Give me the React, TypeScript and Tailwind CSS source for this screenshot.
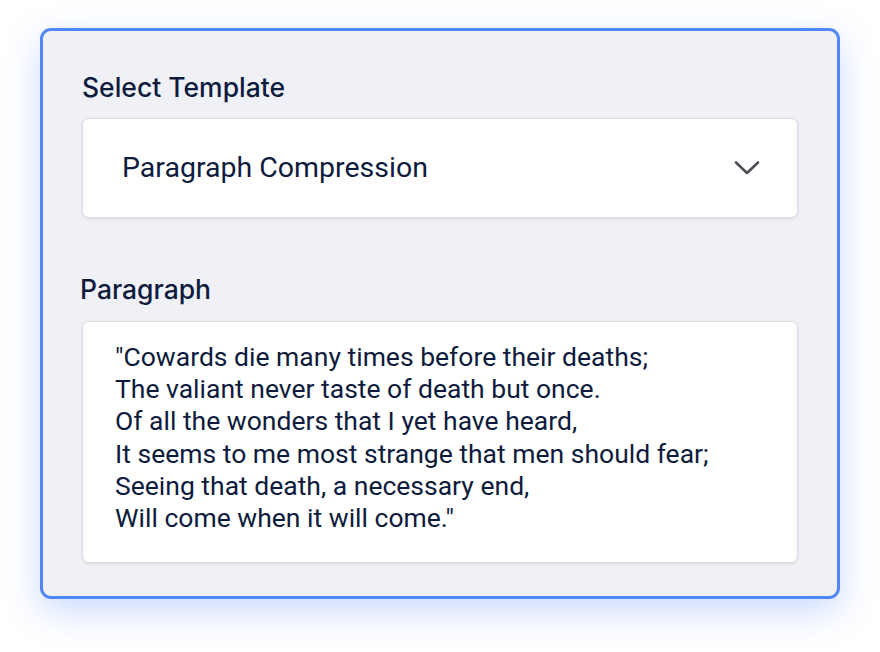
import React from 'react';

const poem = `"Cowards die many times before their deaths;
The valiant never taste of death but once.
Of all the wonders that I yet have heard,
It seems to me most strange that men should fear;
Seeing that death, a necessary end,
Will come when it will come."`;

export default function App() {
    return (
        <main className="min-h-[652px] bg-white pt-[28px] pl-[40px] font-['Roboto',sans-serif] text-[#0e1b3d]">
            <div className="w-[800px] rounded-[11px] border-[3px] border-[#5086f8] bg-[#f0f1f6] px-[39px] pt-[40px] pb-[33px] shadow-[0_12px_36px_rgba(80,134,248,0.3)]">
                {/* Template select */}
                <label className="block font-['Inter',sans-serif] text-[26.5px] font-medium leading-[32px]">Select Template</label>
                <div className="mt-[15px] flex h-[100px] items-center justify-between rounded-[7px] border border-[#dcdde2] bg-white pl-[39px] pr-[37px] shadow-[0_1px_3px_rgba(0,0,0,0.1)]">
                    <span className="text-[28.5px] leading-[32px]">Paragraph Compression</span>
                    <svg width="26" height="16" viewBox="0 0 26 16" fill="none">
                        <path d="M2 2.5 L13 13 L24 2.5" stroke="#4b4d57" strokeWidth="2.6" strokeLinecap="round" strokeLinejoin="round" />
                    </svg>
                </div>

                {/* Paragraph */}
                <label className="mt-[55px] -ml-[2px] block font-['Inter',sans-serif] text-[26.5px] font-medium leading-[32px]">Paragraph</label>
                <textarea
                    readOnly
                    value={poem}
                    className="mt-[16px] block h-[242px] w-full resize-none rounded-[7px] border border-[#dcdde2] bg-white pl-[32px] pr-[20px] pt-[19px] text-[26.5px] leading-[32.2px] text-[#0e1b3d] shadow-[0_1px_3px_rgba(0,0,0,0.1)] outline-none"
                />
            </div>
        </main>
    );
}
